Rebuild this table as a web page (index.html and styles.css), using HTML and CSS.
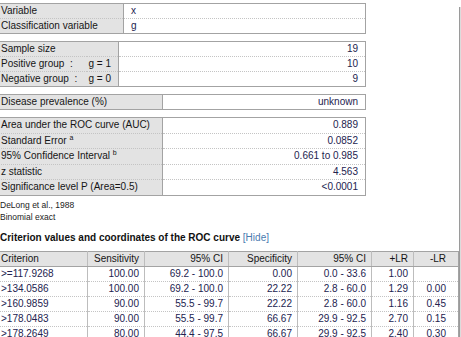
FILE: index.html
```html
<!DOCTYPE html>
<html>
<head>
<meta charset="utf-8">
<link rel="stylesheet" href="styles.css">
</head>
<body>
<div class="screen">
  <div class="content">
    <table class="grid t1">
      <colgroup><col class="c-lab1"><col></colgroup>
      <tr><td class="lab">Variable</td><td class="val left">x</td></tr>
      <tr><td class="lab">Classification variable</td><td class="val left">g</td></tr>
    </table>

    <table class="grid t2">
      <colgroup><col class="c-lab2a"><col class="c-lab2b"><col></colgroup>
      <tr><td class="lab" colspan="2">Sample size</td><td class="val">19</td></tr>
      <tr><td class="lab nb">Positive group &nbsp;:</td><td class="lab nb grp">g = 1</td><td class="val">10</td></tr>
      <tr><td class="lab nb">Negative group &nbsp;:</td><td class="lab nb grp">g = 0</td><td class="val">9</td></tr>
    </table>

    <table class="grid t3">
      <colgroup><col class="c-lab3"><col></colgroup>
      <tr><td class="lab">Disease prevalence (%)</td><td class="val">unknown</td></tr>
    </table>

    <table class="grid t4">
      <colgroup><col class="c-lab3"><col></colgroup>
      <tr><td class="lab">Area under the ROC curve (AUC)</td><td class="val">0.889</td></tr>
      <tr><td class="lab">Standard Error <sup>a</sup></td><td class="val">0.0852</td></tr>
      <tr><td class="lab">95% Confidence Interval <sup>b</sup></td><td class="val">0.661 to 0.985</td></tr>
      <tr><td class="lab">z statistic</td><td class="val">4.563</td></tr>
      <tr><td class="lab">Significance level P (Area=0.5)</td><td class="val">&lt;0.0001</td></tr>
    </table>

    <div class="notes">
      <div class="note">DeLong et al., 1988</div>
      <div class="note">Binomial exact</div>
    </div>

    <h2 class="heading">Criterion values and coordinates of the ROC curve <a class="hide">[Hide]</a></h2>

    <table class="roc">
      <colgroup>
        <col class="r1"><col class="r2"><col class="r3"><col class="r4"><col class="r5"><col class="r6"><col class="r7">
      </colgroup>
      <tr class="hd"><td class="left">Criterion</td><td>Sensitivity</td><td>95% CI</td><td>Specificity</td><td>95% CI</td><td>+LR</td><td class="last">-LR</td></tr>
      <tr><td class="left">&gt;=117.9268</td><td>100.00</td><td>69.2 - 100.0</td><td>0.00</td><td>0.0 - 33.6</td><td>1.00</td><td class="last"></td></tr>
      <tr><td class="left">&gt;134.0586</td><td>100.00</td><td>69.2 - 100.0</td><td>22.22</td><td>2.8 - 60.0</td><td>1.29</td><td class="last">0.00</td></tr>
      <tr><td class="left">&gt;160.9859</td><td>90.00</td><td>55.5 - 99.7</td><td>22.22</td><td>2.8 - 60.0</td><td>1.16</td><td class="last">0.45</td></tr>
      <tr><td class="left">&gt;178.0483</td><td>90.00</td><td>55.5 - 99.7</td><td>66.67</td><td>29.9 - 92.5</td><td>2.70</td><td class="last">0.15</td></tr>
      <tr><td class="left">&gt;178.2649</td><td>80.00</td><td>44.4 - 97.5</td><td>66.67</td><td>29.9 - 92.5</td><td>2.40</td><td class="last">0.30</td></tr>
    </table>
  </div>
  <div class="edge"></div>
</div>
</body>
</html>
```

FILE: styles.css
```css
html, body {
  margin: 0;
  padding: 0;
  background: #ffffff;
  overflow: hidden;
}
body {
  font-family: "Liberation Sans", Arial, sans-serif;
  font-size: 10px;
  color: #111111;
}
.screen {
  display: flex;
  width: 461px;
  height: 337px;
  overflow: hidden;
}
.content {
  width: 459px;
  padding-top: 3px;
  margin-left: -3px;
  flex: none;
}
.edge {
  flex: none;
  width: 1px;
  margin-top: 7px;
  border-left: 1px solid #9a9a9a;
  background: #dcdcdc;
  margin-left: 3px;
}
.grid {
  border-collapse: collapse;
  table-layout: fixed;
  width: 369px;
  border: 1px solid #a3a3a3;
  margin-bottom: 7px;
}
.grid td {
  height: 14px;
  padding: 0 7px 0 3px;
  line-height: 14px;
  white-space: nowrap;
  border-top: 1px dotted #c4c4c4;
}
.grid tr:first-child td { border-top: none; }
.grid td.lab {
  background: #e3e3e3;
  border-right: 1px solid #a3a3a3;
  color: #151515;
}
.grid td.nb { border-right: none; }
.grid td.grp { border-right: 1px solid #a3a3a3; padding-left: 2px; padding-right: 0; }
.grid td.val {
  text-align: right;
  color: #23234f;
}
.grid td.val.left {
  text-align: left;
  padding-left: 7px;
}
.c-lab1 { width: 126px; }
.c-lab2a { width: 89px; }
.c-lab2b { width: 32px; }
.c-lab3 { width: 165px; }
.t4 td { height: 14.5px; line-height: 14.5px; }
.t4 { margin-bottom: 0; }
sup {
  font-size: 7px;
  line-height: 0;
  vertical-align: 4px;
}
.notes {
  padding: 3px 0 0 3px;
  font-size: 8.5px;
  color: #222222;
}
.note {
  height: 12.5px;
  line-height: 12.5px;
}
.heading {
  margin: 7px 0 0 0;
  padding-left: 3px;
  font-size: 10px;
  font-weight: bold;
  line-height: 13px;
  height: 13px;
  color: #111111;
}
.hide {
  font-weight: normal;
  color: #4a7ab0;
}
.roc {
  margin-top: 7px;
  border-collapse: collapse;
  table-layout: fixed;
  width: 461px;
  border: 1px solid #a3a3a3;
}
.roc td {
  height: 14px;
  line-height: 14px;
  padding: 0 5px 0 3px;
  text-align: right;
  white-space: nowrap;
  color: #23234f;
  border-left: 1px solid #bdbdbd;
  border-top: 1px dotted #c4c4c4;
}
.roc td.left { text-align: left; }
.roc td.last { padding-right: 12px; }
.roc tr.hd td {
  background: #e3e3e3;
  color: #151515;
  border-top: none;
  border-bottom: 1px solid #a3a3a3;
}
.r1 { width: 90px; }
.r2 { width: 57px; }
.r3 { width: 84px; }
.r4 { width: 69px; }
.r5 { width: 74px; }
.r6 { width: 42px; }
.r7 { width: 45px; }
```
